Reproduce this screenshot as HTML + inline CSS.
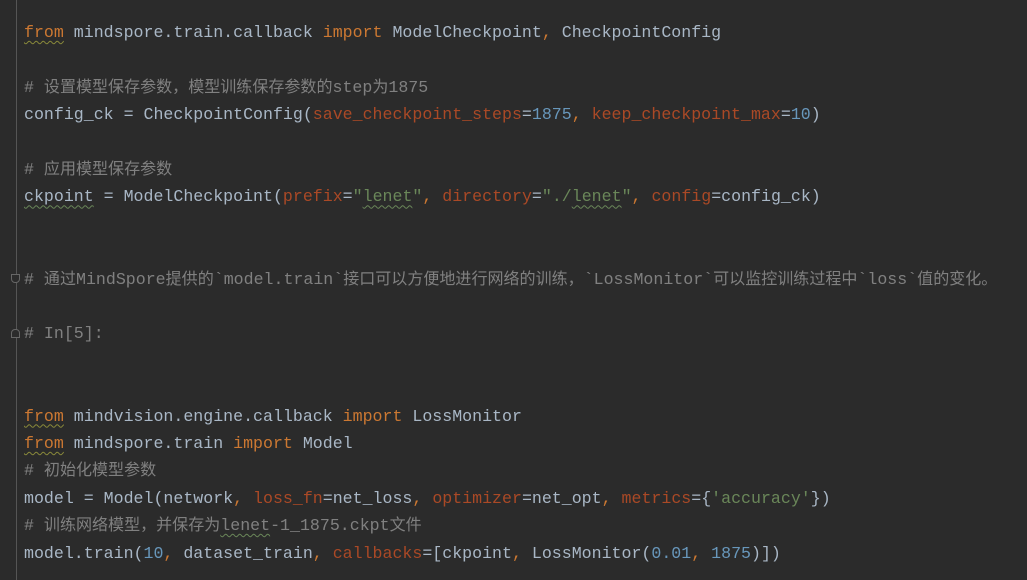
<!DOCTYPE html>
<html><head><meta charset="utf-8"><style>
html,body{margin:0;padding:0;background:#2b2b2b;width:1027px;height:580px;overflow:hidden}
.g{position:absolute;left:16px;top:0;width:1px;height:580px;background:#555}
.l{position:absolute;left:24px;height:27.4px;line-height:27.4px;font-family:"Liberation Mono","Noto Sans CJK SC",monospace;font-size:16.6px;color:#a9b7c6;white-space:pre}
.z{font-size:16.05px}
.k{color:#cc7832}.c{color:#808080}.p{color:#aa4926}.s{color:#6a8759}.n{color:#6897bb}
.w{text-decoration:underline wavy #6a8759;text-decoration-thickness:1px;text-underline-offset:3px}
.wk{text-decoration:underline wavy #8a8a3a;text-decoration-thickness:1px;text-underline-offset:3px}
.f{position:absolute;left:11px;width:9px;height:9px;border:1px solid #666;box-sizing:border-box;background:#2b2b2b}
</style></head><body>
<div class="g"></div>
<div class="f" style="top:274px;border-radius:0 0 4px 4px"></div>
<div class="f" style="top:329px;border-radius:4px 4px 0 0"></div>
<div class="l" style="top:19px"><span class="k wk">from</span> mindspore.train.callback <span class="k">import</span> ModelCheckpoint<span class="k">,</span> CheckpointConfig</div>
<div class="l c" style="top:73.8px"># <span class="z">设置模型保存参数，模型训练保存参数的</span>step<span class="z">为</span>1875</div>
<div class="l" style="top:101.2px">config_ck = CheckpointConfig(<span class="p">save_checkpoint_steps</span>=<span class="n">1875</span><span class="k">, </span><span class="p">keep_checkpoint_max</span>=<span class="n">10</span>)</div>
<div class="l c" style="top:156px"># <span class="z">应用模型保存参数</span></div>
<div class="l" style="top:183.4px"><span class="w">ckpoint</span> = ModelCheckpoint(<span class="p">prefix</span>=<span class="s">"<span class="w">lenet</span>"</span><span class="k">, </span><span class="p">directory</span>=<span class="s">"./<span class="w">lenet</span>"</span><span class="k">, </span><span class="p">config</span>=config_ck)</div>
<div class="l c" style="top:265.6px"># <span class="z">通过</span>MindSpore<span class="z">提供的</span>`model.train`<span class="z">接口可以方便地进行网络的训练，</span>`LossMonitor`<span class="z">可以监控训练过程中</span>`loss`<span class="z">值的变化。</span></div>
<div class="l c" style="top:320.4px"># In[5]:</div>
<div class="l" style="top:402.6px"><span class="k wk">from</span> mindvision.engine.callback <span class="k">import</span> LossMonitor</div>
<div class="l" style="top:430px"><span class="k wk">from</span> mindspore.train <span class="k">import</span> Model</div>
<div class="l c" style="top:457.4px"># <span class="z">初始化模型参数</span></div>
<div class="l" style="top:484.8px">model = Model(network<span class="k">, </span><span class="p">loss_fn</span>=net_loss<span class="k">, </span><span class="p">optimizer</span>=net_opt<span class="k">, </span><span class="p">metrics</span>={<span class="s">'accuracy'</span>})</div>
<div class="l c" style="top:512.2px"># <span class="z">训练网络模型，并保存为</span><span class="w">lenet</span>-1_1875.ckpt<span class="z">文件</span></div>
<div class="l" style="top:539.6px">model.train(<span class="n">10</span><span class="k">, </span>dataset_train<span class="k">, </span><span class="p">callbacks</span>=[ckpoint<span class="k">, </span>LossMonitor(<span class="n">0.01</span><span class="k">, </span><span class="n">1875</span>)])</div>
</body></html>
